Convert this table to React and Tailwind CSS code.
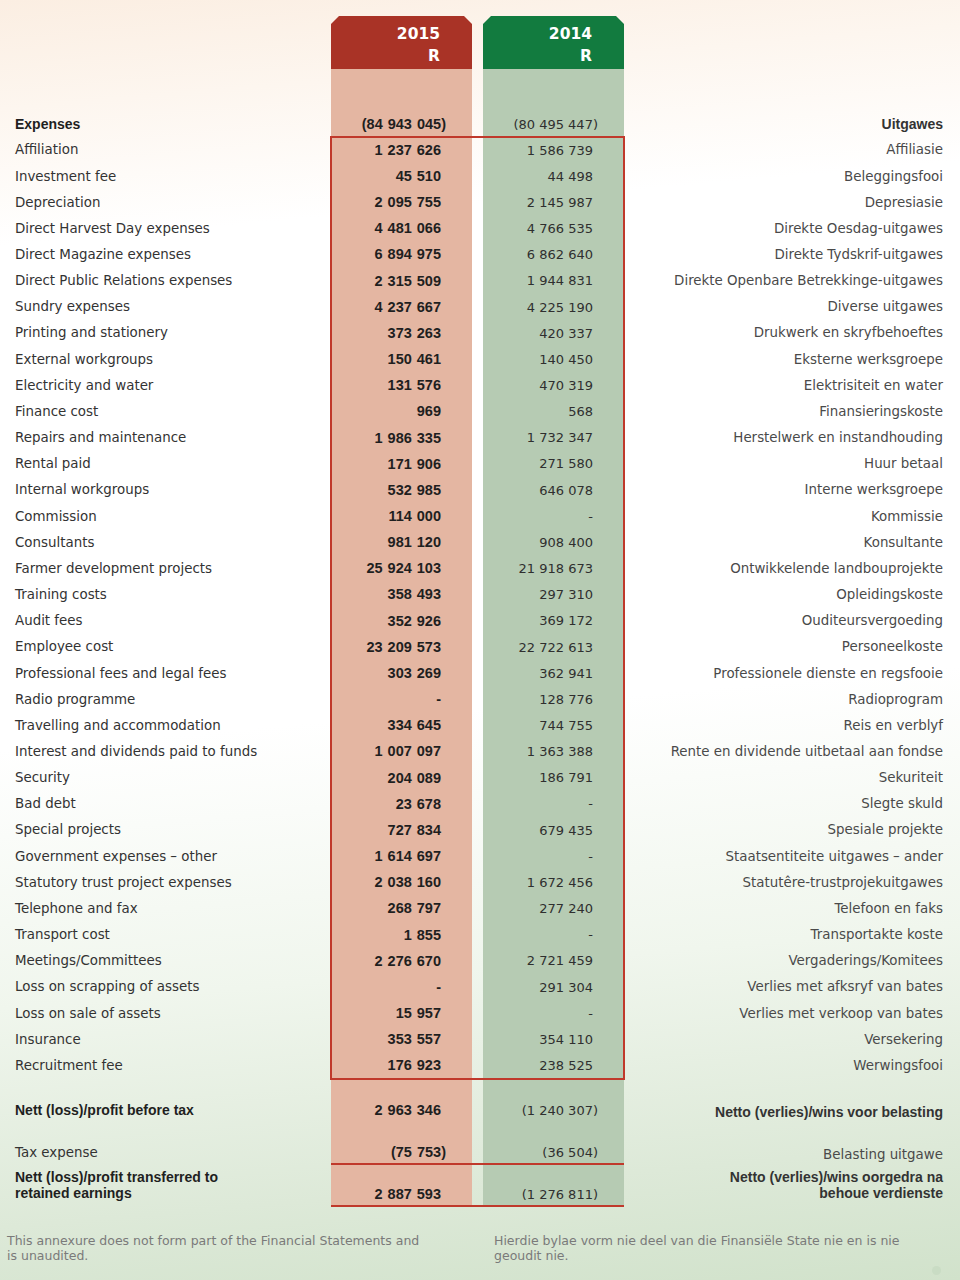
import React from "react";

const rows = [
  ["Affiliation", "1 237 626", "1 586 739", "Affiliasie"],
  ["Investment fee", "45 510", "44 498", "Beleggingsfooi"],
  ["Depreciation", "2 095 755", "2 145 987", "Depresiasie"],
  ["Direct Harvest Day expenses", "4 481 066", "4 766 535", "Direkte Oesdag-uitgawes"],
  ["Direct Magazine expenses", "6 894 975", "6 862 640", "Direkte Tydskrif-uitgawes"],
  ["Direct Public Relations expenses", "2 315 509", "1 944 831", "Direkte Openbare Betrekkinge-uitgawes"],
  ["Sundry expenses", "4 237 667", "4 225 190", "Diverse uitgawes"],
  ["Printing and stationery", "373 263", "420 337", "Drukwerk en skryfbehoeftes"],
  ["External workgroups", "150 461", "140 450", "Eksterne werksgroepe"],
  ["Electricity and water", "131 576", "470 319", "Elektrisiteit en water"],
  ["Finance cost", "969", "568", "Finansieringskoste"],
  ["Repairs and maintenance", "1 986 335", "1 732 347", "Herstelwerk en instandhouding"],
  ["Rental paid", "171 906", "271 580", "Huur betaal"],
  ["Internal workgroups", "532 985", "646 078", "Interne werksgroepe"],
  ["Commission", "114 000", "-", "Kommissie"],
  ["Consultants", "981 120", "908 400", "Konsultante"],
  ["Farmer development projects", "25 924 103", "21 918 673", "Ontwikkelende landbouprojekte"],
  ["Training costs", "358 493", "297 310", "Opleidingskoste"],
  ["Audit fees", "352 926", "369 172", "Ouditeursvergoeding"],
  ["Employee cost", "23 209 573", "22 722 613", "Personeelkoste"],
  ["Professional fees and legal fees", "303 269", "362 941", "Professionele dienste en regsfooie"],
  ["Radio programme", "-", "128 776", "Radioprogram"],
  ["Travelling and accommodation", "334 645", "744 755", "Reis en verblyf"],
  ["Interest and dividends paid to funds", "1 007 097", "1 363 388", "Rente en dividende uitbetaal aan fondse"],
  ["Security", "204 089", "186 791", "Sekuriteit"],
  ["Bad debt", "23 678", "-", "Slegte skuld"],
  ["Special projects", "727 834", "679 435", "Spesiale projekte"],
  ["Government expenses – other", "1 614 697", "-", "Staatsentiteite uitgawes – ander"],
  ["Statutory trust project expenses", "2 038 160", "1 672 456", "Statutêre-trustprojekuitgawes"],
  ["Telephone and fax", "268 797", "277 240", "Telefoon en faks"],
  ["Transport cost", "1 855", "-", "Transportakte koste"],
  ["Meetings/Committees", "2 276 670", "2 721 459", "Vergaderings/Komitees"],
  ["Loss on scrapping of assets", "-", "291 304", "Verlies met afksryf van bates"],
  ["Loss on sale of assets", "15 957", "-", "Verlies met verkoop van bates"],
  ["Insurance", "353 557", "354 110", "Versekering"],
  ["Recruitment fee", "176 923", "238 525", "Werwingsfooi"],
];

const font = { fontFamily: '"DejaVu Sans", "Liberation Sans", sans-serif' };
const boldFont = { fontFamily: '"Liberation Sans", Arial, sans-serif' };

function Num({ v }) {
  if (v.startsWith("(")) {
    return (
      <span className="whitespace-nowrap">
        {v.slice(0, -1)}
        <span className="-mr-[5px]">)</span>
      </span>
    );
  }
  return <span className="whitespace-nowrap">{v}</span>;
}

function Cells({ a, b, h, align = "items-center", pt = "", pt2 = "" }) {
  return (
    <div className={`flex gap-[11px] ${h}`}>
      <div
        className={`w-[141px] bg-[#e4b6a2] flex justify-end pr-[31px] ${align} ${pt} font-bold text-[14.5px] [word-spacing:1px] text-[#1f1f1f]`}
        style={boldFont}
      >
        <Num v={a} />
      </div>
      <div className={`w-[141px] bg-[#b6cbb3] flex justify-end pr-[31px] ${align} ${pt2 || pt} text-[13px] text-[#2f2f2f]`}>
        <Num v={b} />
      </div>
    </div>
  );
}

export default function App() {
  return (
    <div
      className="w-[960px] h-[1280px] relative overflow-hidden text-[13.4px] leading-none bg-[linear-gradient(175deg,#fbeee2_0%,#fdf6ef_8%,#ffffff_18%,#ffffff_55%,#f0f6ed_74%,#dde9d8_90%,#d1e2cb_100%)]"
      style={font}
    >
      <div className="flex">
        {/* Left labels */}
        <div className="w-[331px] pl-[15px] text-[#333] whitespace-nowrap">
          <div className="h-[111px]" />
          <div className="h-[26px] flex items-center font-bold text-[14px] text-[#1f1f1f]" style={boldFont}>
            Expenses
          </div>
          {rows.map((r) => (
            <div key={r[0]} className="h-[26.17px] flex items-center">
              {r[0]}
            </div>
          ))}
          <div className="h-[52px] pt-[24px] font-bold text-[14px] text-[#1f1f1f]" style={boldFont}>
            Nett (loss)/profit before tax
          </div>
          <div className="h-[32px] pt-[15px]">Tax expense</div>
          <div className="h-[42px] pt-[6px] font-bold text-[14px] text-[#1f1f1f] leading-[16px]" style={boldFont}>
            Nett (loss)/profit transferred to
            <br />
            retained earnings
          </div>
        </div>

        {/* Middle columns */}
        <div className="w-[293px]">
          <div className="h-[16px]" />
          <div className="flex gap-[11px] h-[53px]">
            <div className="w-[141px] bg-[#a93326] [clip-path:polygon(8px_0,calc(100%-8px)_0,100%_8px,100%_100%,0_100%,0_8px)] flex flex-col items-end pr-[32px] pt-[11px] gap-[6px] text-white font-bold text-[15.5px]">
              <span>2015</span>
              <span>R</span>
            </div>
            <div className="w-[141px] bg-[#127b3f] [clip-path:polygon(8px_0,calc(100%-8px)_0,100%_8px,100%_100%,0_100%,0_8px)] flex flex-col items-end pr-[32px] pt-[11px] gap-[6px] text-white font-bold text-[15.5px]">
              <span>2014</span>
              <span>R</span>
            </div>
          </div>
          <div className="flex gap-[11px] h-[42px]">
            <div className="w-[141px] bg-[#e4b6a2]" />
            <div className="w-[141px] bg-[#b6cbb3]" />
          </div>
          <Cells a="(84 943 045)" b="(80 495 447)" h="h-[26px]" />
          <div className="outline-2 outline-[#c0392b] -outline-offset-1">
            {rows.map((r) => (
              <Cells key={r[0]} a={r[1]} b={r[2]} h="h-[26.17px]" />
            ))}
          </div>
          <Cells a="2 963 346" b="(1 240 307)" h="h-[52px]" align="items-start" pt="pt-[24px]" pt2="pt-[25px]" />
          <Cells a="(75 753)" b="(36 504)" h="h-[32px]" align="items-start" pt="pt-[14px]" pt2="pt-[15px]" />
          <div className="border-t-2 border-b-2 border-[#c0392b]">
            <Cells a="2 887 593" b="(1 276 811)" h="h-[40px]" align="items-start" pt="pt-[22px]" pt2="pt-[23px]" />
          </div>
        </div>

        {/* Right labels */}
        <div className="flex-1 pr-[17px] text-right text-[#4a4a4a] whitespace-nowrap">
          <div className="h-[111px]" />
          <div className="h-[26px] flex items-center justify-end font-bold text-[14px] text-[#333]" style={boldFont}>
            Uitgawes
          </div>
          {rows.map((r) => (
            <div key={r[3]} className="h-[26.17px] flex items-center justify-end">
              {r[3]}
            </div>
          ))}
          <div className="h-[52px] pt-[26px] font-bold text-[14px] text-[#333]" style={boldFont}>
            Netto (verlies)/wins voor belasting
          </div>
          <div className="h-[32px] pt-[17px]">Belasting uitgawe</div>
          <div className="h-[42px] pt-[6px] font-bold text-[14px] text-[#333] leading-[16px]" style={boldFont}>
            Netto (verlies)/wins oorgedra na
            <br />
            behoue verdienste
          </div>
        </div>
      </div>

      {/* Footer */}
      <div className="flex mt-[26px] text-[#7a7a7a] text-[12.5px] leading-[15px]">
        <div className="w-[494px] pl-[7px] pr-[70px]">
          This annexure does not form part of the Financial Statements and is unaudited.
        </div>
        <div className="w-[420px]">
          Hierdie bylae vorm nie deel van die Finansiële State nie en is nie geoudit nie.
        </div>
      </div>
      <div className="absolute left-[932px] top-[1266px] w-[9px] h-[9px] rounded-full bg-[#c9dcc4]" />
    </div>
  );
}
